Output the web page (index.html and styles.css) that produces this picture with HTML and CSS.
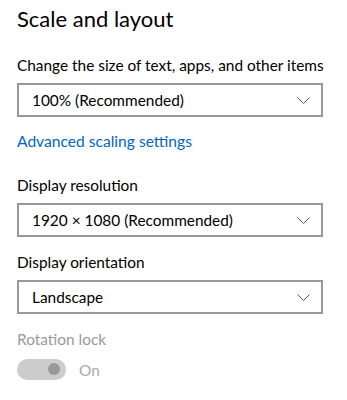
FILE: index.html
```html
<!DOCTYPE html>
<html lang="en">
<head>
  <meta charset="UTF-8" />
  <title>Scale and layout</title>
  <link rel="stylesheet" href="styles.css">
</head>
<body>
  <div class="panel">
    <h1>Scale and layout</h1>

    <div class="label first">Change the size of text, apps, and other items</div>
    <div class="select">
      <span>100% (Recommended)</span>
      <svg class="chevron" width="13" height="7" viewBox="0 0 13 7">
        <path d="M0.5 0.5 L6.5 6.5 L12.5 0.5" fill="none" stroke="#555" stroke-width="1" />
      </svg>
    </div>

    <a class="link" href="#">Advanced scaling settings</a>

    <div class="label gap">Display resolution</div>
    <div class="select">
      <span>1920 × 1080 (Recommended)</span>
      <svg class="chevron" width="13" height="7" viewBox="0 0 13 7">
        <path d="M0.5 0.5 L6.5 6.5 L12.5 0.5" fill="none" stroke="#555" stroke-width="1" />
      </svg>
    </div>

    <div class="label">Display orientation</div>
    <div class="select">
      <span>Landscape</span>
      <svg class="chevron" width="13" height="7" viewBox="0 0 13 7">
        <path d="M0.5 0.5 L6.5 6.5 L12.5 0.5" fill="none" stroke="#555" stroke-width="1" />
      </svg>
    </div>

    <div class="label disabled">Rotation lock</div>
    <div class="toggle-row">
      <div class="toggle"><span class="knob"></span></div>
      <span class="toggle-text">On</span>
    </div>
  </div>
</body>
</html>
```

FILE: styles.css
```css
* {
  box-sizing: border-box;
}

body {
  margin: 0;
  padding: 0;
  background: #ffffff;
  font-family: 'Lato', sans-serif;
  color: #000;
}

.panel {
  padding: 4px 0 0 17px;
  width: 323px;
}

h1 {
  margin: 0;
  font-size: 22px;
  font-weight: 400;
  line-height: 30px;
}

.label {
  font-size: 15.4px;
  line-height: 20px;
  margin-top: 15px;
  white-space: nowrap;
}

.label.first {
  margin-top: 21px;
}

.label.gap {
  margin-top: 24px;
}

.label.disabled {
  color: #9a9a9a;
}

.select {
  display: flex;
  align-items: center;
  justify-content: space-between;
  height: 34px;
  margin-top: 8px;
  padding: 0 11px 0 13px;
  border: 2px solid #999;
  font-size: 15.4px;
}

.chevron {
  display: block;
}

.link {
  display: block;
  margin-top: 14px;
  font-size: 15.6px;
  line-height: 20px;
  color: #0067c0;
  text-decoration: none;
}

.toggle-row {
  display: flex;
  align-items: center;
  margin-top: 10px;
  height: 21px;
}

.toggle {
  position: relative;
  width: 49px;
  height: 21px;
  border-radius: 11px;
  background: #cccccc;
}

.knob {
  position: absolute;
  top: 4px;
  right: 6px;
  width: 12px;
  height: 12px;
  border-radius: 50%;
  background: #999;
}

.toggle-text {
  margin-left: 13px;
  font-size: 15.4px;
  color: #aaa;
}
```
